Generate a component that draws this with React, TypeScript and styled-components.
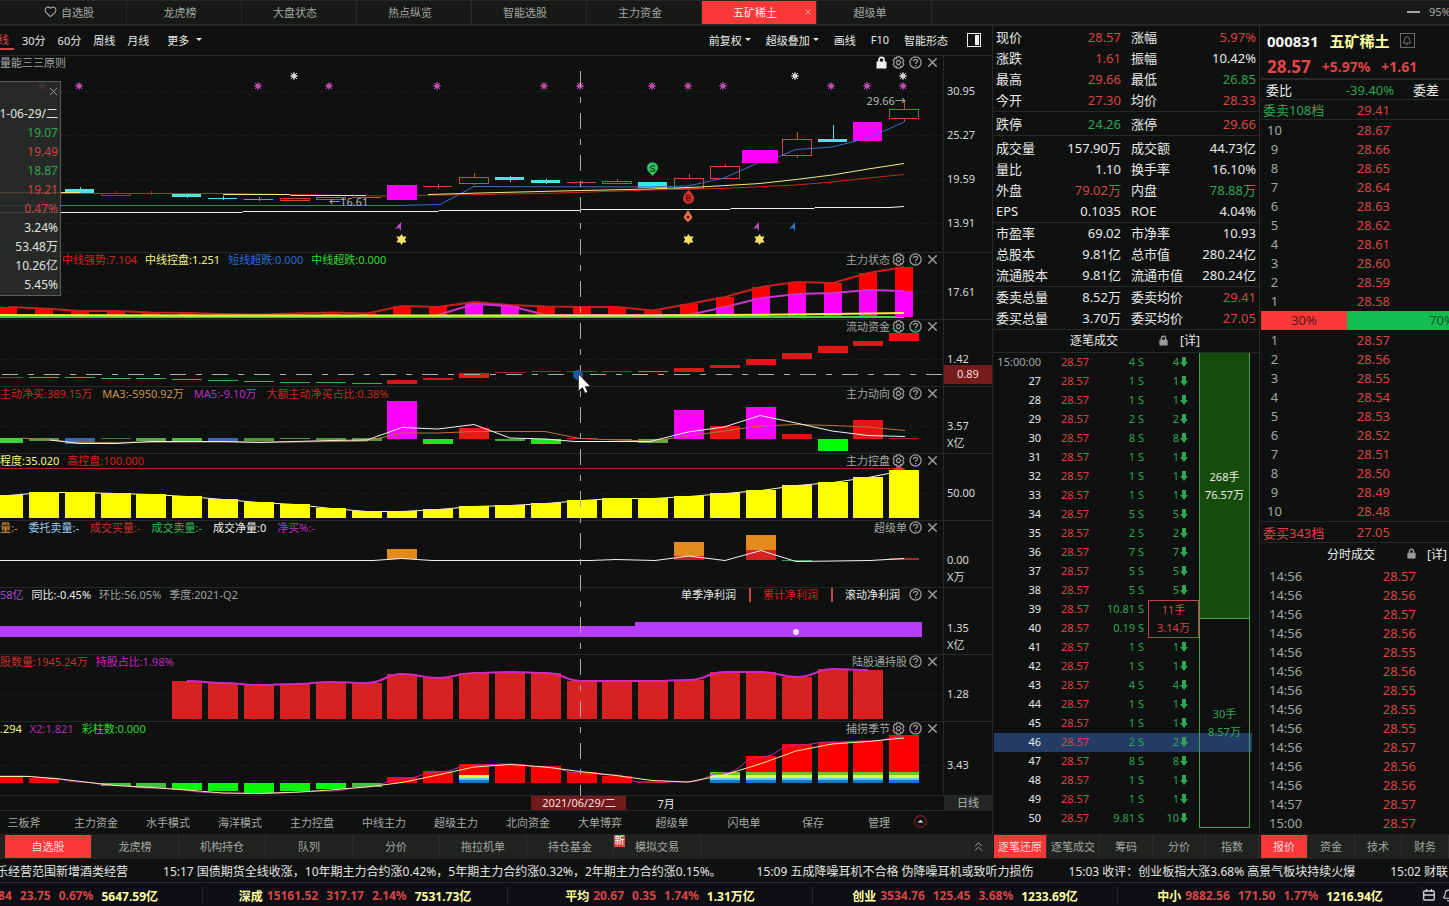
import React from "react";
import styled, { createGlobalStyle } from "styled-components";
import { Bell, ChevronsUp, Heart, X } from "lucide-react";

const C = {
  bg: "#0e110f",
  line: "#262928",
  text: "#e9e9e9",
  dim: "#a3a6a3",
  red: "#d64545",
  green: "#2fa552",
  hot: "#fb3838",
  magenta: "#ff00ff",
  yellow: "#ffffa0",
};

const Global = createGlobalStyle`
  * { box-sizing: border-box; }
  html, body { margin: 0; background: ${C.bg}; }
  body {
    color: ${C.text};
    font-family: "Noto Sans", "Noto Sans CJK SC", sans-serif;
    font-size: 11px;
    overflow-x: hidden;
  }
  button { font: inherit; color: inherit; background: none; border: 0; padding: 0; margin: 0; cursor: pointer; white-space: nowrap; }
  svg { display: block; flex: none; }
  table { border-spacing: 0; }
  td { padding: 0; }
`;

/* ---------- page frame ---------- */
const Page = styled.div`
  display: flex;
  flex-direction: column;
  overflow: hidden;
`;
const TopTabs = styled.nav`
  display: flex;
  height: 26px;
  padding-left: 12px;
  background: #171917;
  border-top: 1px solid #262826;
  border-bottom: 2px solid #252827;
`;
const TopTab = styled.button<{ $active?: boolean; $icon?: boolean }>`
  position: relative;
  display: flex;
  align-items: center;
  justify-content: center;
  gap: 4px;
  width: 115px;
  flex: none;
  padding: 0 ${(p) => (p.$icon ? 0 : 8)}px 2px 0;
  border-right: 1px solid ${C.line};
  color: ${(p) => (p.$active ? "#ffe9e9" : C.dim)};
  background: ${(p) => (p.$active ? C.hot : "transparent")};
`;
const TabClose = styled.span`
  position: absolute;
  right: 3px;
  color: #ffa0a0;
`;
const WindowTools = styled.div`
  display: flex;
  align-items: center;
  gap: 9px;
  margin-left: auto;
  width: 42px;
  flex: none;
  padding-bottom: 2px;
  color: ${C.dim};
`;
const Main = styled.main`
  display: grid;
  grid-template-columns: minmax(0, 1fr) 267px 189px;
`;
const Column = styled.section`
  display: flex;
  flex-direction: column;
  min-width: 0;
  overflow: hidden;
`;
const ChartColumn = styled(Column)`
  border-right: 1px solid ${C.line};
`;
const MiddleColumn = styled(Column)`
  padding-left: 1px;
  border-right: 1px solid #2a2d2b;
`;
const BookColumn = styled(Column)`
  padding-left: 1px;
`;

/* ---------- toolbar ---------- */
const Toolbar = styled.div`
  display: flex;
  align-items: center;
  justify-content: space-between;
  height: 30px;
  padding: 0 11px 2px 0;
  border-bottom: 1px solid ${C.line};
`;
const ToolGroup = styled.div<{ $gap: number }>`
  display: flex;
  align-items: center;
  gap: ${(p) => p.$gap}px;
`;
const ToolButton = styled.button<{ $active?: boolean }>`
  display: flex;
  align-items: center;
  gap: 3px;
  height: 20px;
  color: ${(p) => (p.$active ? C.red : C.text)};
  border-bottom: ${(p) => (p.$active ? `2px solid ${C.red}` : "0")};
`;
const ActivePeriod = styled(ToolButton)`
  width: 14px;
  margin-right: -4px;
  text-indent: -2px;
`;
const MoreButton = styled(ToolButton)`
  margin-left: 6px;
  gap: 7px;
`;
const SideToggle = styled(ToolButton)`
  margin-left: 4px;
`;

/* ---------- chart panels ---------- */
const Charts = styled.div`
  position: relative;
`;
const Panel = styled.article<{ $h: number }>`
  display: flex;
  height: ${(p) => p.$h}px;
  border-bottom: 1px solid ${C.line};
`;
const Plot = styled.div`
  position: relative;
  flex: 1;
  min-width: 0;
`;
const PlotSvg = styled.svg`
  width: 100%;
  height: 100%;
`;
const PanelHead = styled.header`
  position: absolute;
  inset: 0 0 auto 0;
  display: flex;
  align-items: center;
  justify-content: space-between;
  height: 14px;
  line-height: 14px;
  padding: 0 2px 1px 0;
  white-space: nowrap;
`;
const Legend = styled.div<{ $start?: number; $gap?: number }>`
  display: flex;
  gap: ${(p) => p.$gap ?? 8}px;
  padding-left: ${(p) => p.$start ?? 0}px;
`;
const Tinted = styled.span<{ $c: string }>`
  color: ${(p) => p.$c};
`;
const PanelTools = styled.div`
  display: flex;
  align-items: center;
  color: ${C.dim};
`;
const IconButton = styled.button`
  display: flex;
  align-items: center;
  justify-content: center;
  width: 17px;
  height: 15px;
  color: #9b9d9b;
`;
const ProfitTabs = styled.div`
  display: flex;
  align-items: center;
  margin-right: 7px;
`;
const ProfitTab = styled.button<{ $active?: boolean }>`
  color: ${(p) => (p.$active ? "#d81e1e" : C.text)};
  & + & {
    margin-left: 13px;
    padding-left: 12px;
    border-left: 2px solid #c04a4a;
  }
`;
const Axis = styled.div<{ $top: number; $step?: number }>`
  position: relative;
  width: 49px;
  flex: none;
  border-left: 1px solid ${C.line};
  padding: ${(p) => p.$top}px 0 0 3px;
  line-height: ${(p) => p.$step ?? 17}px;
  color: #d8d8d8;
`;
const AxisMarker = styled.div`
  position: absolute;
  top: 45px;
  left: 0;
  right: 0;
  height: 19px;
  line-height: 18px;
  text-align: center;
  background: #761c1c;
  color: #ffdcdc;
`;
const PriceNote = styled.span<{ $x: number; $y: number }>`
  position: absolute;
  left: ${(p) => p.$x}%;
  top: ${(p) => p.$y}px;
  line-height: 14px;
  color: #b6b6b6;
  white-space: nowrap;
`;
const Crosshair = styled.svg`
  position: absolute;
  top: 0;
  left: 0;
  width: calc(100% - 49px);
  height: 100%;
  pointer-events: none;
`;
const DayCard = styled.aside`
  position: absolute;
  left: 0;
  top: 25px;
  width: 61px;
  height: 215px;
  padding: 22px 2px 0 0;
  display: flex;
  flex-direction: column;
  align-items: flex-end;
  overflow: hidden;
  background: rgba(42, 44, 42, 0.88);
  border: 1px solid #5c5e5c;
  border-left: 0;
  font-size: 12px;
`;
const DayLine = styled.div<{ $c?: string }>`
  flex: none;
  height: 19px;
  line-height: 19px;
  white-space: nowrap;
  color: ${(p) => p.$c ?? "#e2e2e2"};
`;
const DayClose = styled.button`
  position: absolute;
  top: 3px;
  right: 0;
  color: #9a9a9a;
`;
const DateAxis = styled.div`
  display: flex;
  height: 15px;
  border-bottom: 1px solid ${C.line};
  line-height: 14px;
`;
const DateTrack = styled.div`
  display: flex;
  flex: 1;
`;
const DateTag = styled.time`
  width: 95px;
  margin-left: 56.3%;
  text-align: center;
  background: #701a1c;
  color: #ffdede;
`;
const MonthMark = styled.span`
  margin-left: 31px;
  line-height: 16px;
`;
const PeriodCell = styled.div`
  width: 48px;
  background: #242725;
  text-align: center;
  color: #b0b3b0;
`;
const IndicatorLinks = styled.nav`
  display: flex;
  align-items: center;
  height: 23px;
  margin-left: -12px;
  padding-bottom: 2px;
`;
const IndicatorButton = styled.button<{ $w: number }>`
  width: ${(p) => p.$w}px;
  flex: none;
  color: #a6a9a6;
`;

/* ---------- tab strips ---------- */
const Strip = styled.nav<{ $pad?: number }>`
  display: flex;
  height: 25px;
  margin-top: auto;
  padding: 1px 0 1px ${(p) => p.$pad ?? 0}px;
  background: #202220;
`;
const StripTab = styled.button<{ $active?: boolean; $w?: number }>`
  position: relative;
  flex: ${(p) => (p.$w ? "none" : "1 1 0")};
  width: ${(p) => (p.$w ? `${p.$w}px` : "auto")};
  padding-bottom: 2px;
  border-right: 1px solid #2c2e2c;
  color: ${(p) => (p.$active ? "#ffdada" : C.dim)};
  background: ${(p) => (p.$active ? C.hot : "transparent")};
`;
const NewBadge = styled.span`
  position: absolute;
  left: 0;
  top: 0;
  width: 11px;
  height: 12px;
  line-height: 11px;
  font-size: 10px;
  color: #fff;
  background: #e04848;
`;
const StripMore = styled.button`
  display: flex;
  align-items: center;
  margin-left: auto;
  padding-right: 6px;
  color: ${C.dim};
`;

/* ---------- quote statistics ---------- */
const StatGroup = styled.dl<{ $top: number }>`
  display: grid;
  grid-template-columns: 1fr 1fr;
  column-gap: 10px;
  margin: 0;
  padding: ${(p) => p.$top}px 3px 0 2px;
  border-bottom: 1px solid ${C.line};
  font-size: 13px;
  line-height: 21px;
`;
const Stat = styled.div`
  display: flex;
  justify-content: space-between;
  height: 21px;
  white-space: nowrap;
`;
const StatName = styled.dt``;
const StatValue = styled.dd<{ $c: string }>`
  margin: 0;
  color: ${(p) => p.$c};
`;
const ListTitle = styled.header<{ $left: number; $gap: number; $last: number }>`
  display: flex;
  align-items: center;
  height: 23px;
  padding: 0 0 2px ${(p) => p.$left}px;
  font-size: 12px;
  white-space: nowrap;
  svg { margin: 0 ${(p) => p.$last}px 0 ${(p) => p.$gap}px; }
`;
const TapeTitle = styled(ListTitle)`
  border-bottom: 1px solid ${C.line};
`;

/* ---------- tick tape ---------- */
const Tape = styled.div`
  position: relative;
  margin-bottom: 6px;
`;
const TapeTable = styled.table`
  table-layout: fixed;
  width: 258px;
  text-align: right;
`;
const TapeRow = styled.tr<{ $on?: boolean }>`
  height: 19px;
  line-height: 17px;
  vertical-align: top;
  color: ${C.green};
  background: ${(p) => (p.$on ? "#233d68" : "transparent")};
`;
const TimeCell = styled.td<{ $first?: boolean }>`
  color: ${(p) => (p.$first ? C.dim : C.text)};
`;
const PriceCell = styled.td`
  color: ${C.red};
`;
const Count = styled.div`
  display: flex;
  align-items: center;
  justify-content: flex-end;
  gap: 1px;
  padding-right: 11px;
`;
const DealCell = styled.td`
  padding-left: 4px;
`;
const Deal = styled.div`
  height: 38px;
  border: 1px solid #c04444;
  text-align: center;
  line-height: 18px;
  color: ${C.red};
`;
const Blocks = styled.div`
  position: absolute;
  top: 0;
  bottom: 0;
  left: 205px;
  width: 51px;
  display: grid;
  grid-template-rows: 14fr 11fr;
`;
const Block = styled.div<{ $filled?: boolean }>`
  display: flex;
  flex-direction: column;
  justify-content: center;
  text-align: center;
  line-height: 18px;
  border: 1px solid #3fa04f;
  border-top: 0;
  color: ${(p) => (p.$filled ? "#e6efe0" : C.green)};
  background: ${(p) => (p.$filled ? "#154c0b" : "transparent")};
`;

/* ---------- order book ---------- */
const StockHead = styled.header`
  padding: 1px 0 0 6px;
  border-bottom: 2px solid ${C.line};
  font-weight: 700;
  white-space: nowrap;
`;
const StockLine = styled.div<{ $h: number }>`
  display: flex;
  align-items: center;
  gap: 11px;
  height: ${(p) => p.$h}px;
`;
const StockText = styled.span<{ $size: number; $c: string }>`
  font-size: ${(p) => p.$size}px;
  color: ${(p) => p.$c};
`;
const AlertButton = styled.button`
  display: flex;
  align-items: center;
  justify-content: center;
  width: 15px;
  height: 15px;
  margin-left: -1px;
  border: 1px solid #686a68;
  color: #8c8e8c;
`;
const BookLine = styled.div<{ $c: string }>`
  display: flex;
  align-items: center;
  height: 20px;
  padding-left: 2px;
  border-bottom: 1px solid ${C.line};
  font-size: 13px;
  white-space: nowrap;
  color: ${(p) => p.$c};
`;
const BookName = styled.span<{ $w: number; $pad?: number }>`
  width: ${(p) => p.$w}px;
  flex: none;
  padding-left: ${(p) => p.$pad ?? 0}px;
`;
const BookValue = styled.span<{ $c: string; $w: number }>`
  width: ${(p) => p.$w}px;
  flex: none;
  color: ${(p) => p.$c};
  text-align: right;
`;
const DiffName = styled.span`
  margin-left: 19px;
`;
const BidLine = styled(BookLine)`
  height: 22px;
  border-top: 1px solid ${C.line};
`;
const BookTable = styled.table<{ $name: number; $price: number }>`
  table-layout: fixed;
  width: 100%;
  margin-top: 1px;
  font-size: 13px;
  line-height: 19px;
  tr { height: 19px; }
  td:first-child { width: ${(p) => p.$name}px; color: ${C.dim}; }
  td:nth-child(2) { width: ${(p) => p.$price}px; color: ${C.red}; text-align: right; }
`;
const LevelTable = styled(BookTable)`
  td:first-child { text-align: center; }
`;
const TradeTable = styled(BookTable)`
  td:first-child { padding-left: 8px; }
`;
const Ratio = styled.div`
  display: flex;
  height: 19px;
  line-height: 19px;
  font-size: 13px;
  color: #5c1616;
`;
const Share = styled.div<{ $c: string; $w: number }>`
  width: ${(p) => p.$w}px;
  flex: none;
  text-align: center;
  background: ${(p) => p.$c};
`;
const ShareRest = styled(Share)`
  color: #0d5527;
`;

/* ---------- bottom bars ---------- */
const News = styled.div`
  display: flex;
  align-items: center;
  gap: 35px;
  height: 24px;
  border-bottom: 1px solid ${C.line};
  font-size: 12px;
  white-space: nowrap;
  overflow: hidden;
`;
const NewsItem = styled.a`
  color: #e4e4e4;
  text-decoration: none;
  flex: none;
  &:first-child { margin-left: -4px; }
`;
const IndexBar = styled.footer`
  display: flex;
  align-items: center;
  height: 23px;
  padding-top: 2px;
  background: #0d0f14;
  font-size: 12px;
  font-weight: 700;
  white-space: nowrap;
  overflow: hidden;
`;
const IndexCell = styled.div<{ $first?: boolean }>`
  display: flex;
  flex: none;
  align-items: center;
  justify-content: ${(p) => (p.$first ? "flex-end" : "center")};
  gap: 8px;
  width: ${(p) => (p.$first ? 203 : 305)}px;
  height: 17px;
  padding-right: ${(p) => (p.$first ? 44 : 0)}px;
  border-right: 1px solid #23262c;
  color: ${C.red};
`;
const IndexName = styled.span`
  color: ${C.yellow};
  margin-right: -4px;
`;
const IndexAmount = styled.span`
  color: ${C.yellow};
`;
const FooterIcons = styled.div`
  display: flex;
  flex: none;
  gap: 7px;
  color: #d4d4d4;
`;

/* ---------- icons ---------- */
const Caret = () => (
  <svg width="6" height="3" viewBox="0 0 6 3"><path d="M0 0h6L3 3z" fill="#e9e9e9" /></svg>
);
const Gear = () => (
  <svg width="13" height="13" viewBox="0 0 14 14" fill="none" stroke="currentColor" strokeWidth="1.3">
    <path d="M5.2 1h3.6l.5 1.6 1.6-.4 1.8 3-1.1 1.8 1.1 1.8-1.8 3-1.6-.4-.5 1.6H5.2l-.5-1.6-1.6.4-1.8-3L2.4 7 1.3 5.2l1.800-3 1.600.4z" />
    <path d="M5.900 4.800h2.200L9.300 7 8.100 9.200H5.900L4.700 7z" />
  </svg>
);
const Help = () => (
  <svg width="13" height="13" viewBox="0 0 14 14" fill="none" stroke="currentColor" strokeWidth="1.4">
    <circle cx="7" cy="7" r="6" />
    <path d="M4.900 5.600c0-2.700 4.300-2.700 4.300-.2 0 1.600-2.100 1.500-2.100 3.100M7.100 9.700v1.300" />
  </svg>
);
const Lock = ({ color, size = 11 }: { color: string; size?: number }) => (
  <svg width={size} height={size + 2} viewBox="0 0 11 13">
    <path d="M3 6V3.800a2.500 2.500 0 0 1 5 0V6" fill="none" stroke={color} strokeWidth="1.700" />
    <rect x="0.500" y="5.500" width="10" height="7" rx="0.500" fill={color} />
  </svg>
);
const DownArrow = () => (
  <svg width="8" height="10" viewBox="0 0 8 10"><path d="M2 0h4v5h2L4 10 0 5h2z" fill="#2fa552" /></svg>
);
const SidePanelIcon = () => (
  <svg width="14" height="14" viewBox="0 0 14 14">
    <rect x="0.500" y="0.500" width="13" height="13" fill="none" stroke="#ededed" />
    <rect x="8" y="2" width="4" height="10" fill="#ededed" />
  </svg>
);
const CalendarIcon = () => (
  <svg width="12" height="12" viewBox="0 0 12 12" fill="none" stroke="currentColor" strokeWidth="1.300">
    <rect x="0.700" y="2" width="10.600" height="9" rx="1" />
    <path d="M0.700 6h10.600M3.500 0v3M8.500 0v3" />
  </svg>
);
const CircleUp = () => (
  <svg width="13" height="13" viewBox="0 0 13 13">
    <circle cx="6.500" cy="6.500" r="5.800" fill="none" stroke="#8c2020" strokeWidth="1.200" />
    <path d="M3.500 7.500 6.500 5l3 2.500z" fill="#f0f0f0" />
  </svg>
);

/* ---------- chart geometry ---------- */
const left = (i: number) => Math.round(-7 + 35.85 * i);
const mid = (i: number) => left(i) + 15;
const W = 943;

type Pt = [number, number];
const path = (pts: Pt[], dy: number) => pts.map(([x, y]) => `${x},${y - dy}`).join(" ");
const smooth = (pts: Pt[], dy: number) => {
  let d = `M${pts[0][0]} ${pts[0][1] - dy}`;
  for (let i = 1; i < pts.length; i++) {
    const [x0, y0] = pts[i - 1];
    const [x1, y1] = pts[i];
    const m = (x0 + x1) / 2;
    d += ` C${m} ${y0 - dy} ${m} ${y1 - dy} ${x1} ${y1 - dy}`;
  }
  return d;
};
const Line = ({ pts, dy, c, w = 1 }: { pts: Pt[]; dy: number; c: string; w?: number }) => (
  <polyline points={path(pts, dy)} fill="none" stroke={c} strokeWidth={w} />
);
const Box = ({ i, a, b, dy, c, w = 30 }: { i: number; a: number; b: number; dy: number; c: string; w?: number }) => (
  <rect x={mid(i) - w / 2} y={a - dy} width={w} height={b - a} fill={c} />
);
const Grid = ({ ys }: { ys: number[] }) => (
  <g stroke="#1a1d1b" strokeDasharray="3 2">
    {ys.map((y) => <line key={y} x1="0" x2={W} y1={y + 0.5} y2={y + 0.5} />)}
  </g>
);

const Burst = ({ x, y, c }: { x: number; y: number; c: string }) => (
  <g transform={`translate(${x} ${y - 56})`}>
    <path d="M-4 0H4M0-4V4M-3-3 3 3M3-3-3 3" stroke={c} strokeWidth="1" />
    <circle r="2.500" fill={c} />
  </g>
);
const Flag = ({ x, c }: { x: number; c: string }) => (
  <path d={`M${x - 4} 173 ${x + 2} 166V175L${x} 172z`} fill={c} />
);
const Hex = ({ x }: { x: number }) => (
  <path transform={`translate(${x} 183.500)`} d="M0-5.500 1.600-3H5L3.400 0 5 3H1.600L0 5.500-1.600 3H-5L-3.400 0-5-3h3.400z" fill="#f7e06a" />
);

type Candle = { i: number; a: number; b: number; hi?: number; lo?: number; k: "hollow" | "fill"; c: string };
const RED = "#d34640";
const CYAN = "#4fe3e6";
const candles: Candle[] = [
  { i: 2, a: 189, b: 193, hi: 187, k: "fill", c: CYAN },
  { i: 3, a: 193, b: 195, hi: 191, k: "hollow", c: "#a83028" },
  { i: 4, a: 193, b: 194, hi: 191, lo: 195, k: "fill", c: "#a83028" },
  { i: 5, a: 194, b: 197, lo: 198, k: "fill", c: CYAN },
  { i: 6, a: 198, b: 199, hi: 196, lo: 200, k: "fill", c: CYAN },
  { i: 7, a: 199, b: 200, hi: 197, lo: 201, k: "fill", c: "#35d535" },
  { i: 8, a: 198, b: 200, k: "hollow", c: RED },
  { i: 9, a: 197, b: 199, k: "hollow", c: RED },
  { i: 10, a: 197, b: 198, k: "fill", c: RED },
  { i: 12, a: 186, b: 187, hi: 184, lo: 189, k: "fill", c: RED },
  { i: 13, a: 177, b: 183, hi: 173, lo: 185, k: "hollow", c: RED },
  { i: 14, a: 177, b: 180, hi: 176, lo: 182, k: "fill", c: CYAN },
  { i: 15, a: 180, b: 183, hi: 179, lo: 184, k: "fill", c: CYAN },
  { i: 16, a: 182, b: 183, hi: 181, lo: 184, k: "fill", c: RED },
  { i: 17, a: 181, b: 183, hi: 179, lo: 184, k: "hollow", c: RED },
  { i: 18, a: 182, b: 188, k: "fill", c: "#2beaf0" },
  { i: 19, a: 178, b: 188, hi: 174, lo: 189, k: "hollow", c: RED },
  { i: 20, a: 166, b: 178, hi: 164, k: "hollow", c: RED },
  { i: 22, a: 139, b: 155, hi: 132, lo: 158, k: "hollow", c: RED },
  { i: 23, a: 139, b: 142, hi: 125, k: "fill", c: CYAN },
  { i: 24, a: 122, b: 141, k: "fill", c: C.magenta },
  { i: 25, a: 109, b: 118, hi: 101, lo: 122, k: "hollow", c: RED },
];

const PriceChart = () => {
  const o = 56;
  return (
    <PlotSvg viewBox={`0 0 ${W} 196`} preserveAspectRatio="none">
      <Grid ys={[35, 79, 123, 167]} />
      {candles.map((k) => (
        <g key={k.i}>
          {k.hi && <line x1={mid(k.i) + 0.5} x2={mid(k.i) + 0.5} y1={k.hi - o} y2={k.a - o} stroke={k.c} />}
          {k.lo && <line x1={mid(k.i) + 0.5} x2={mid(k.i) + 0.5} y1={k.b - o} y2={k.lo - o} stroke={k.c} />}
          {k.k === "fill"
            ? <rect x={left(k.i)} y={k.a - o} width="29" height={k.b - k.a} fill={k.c} />
            : <rect x={left(k.i) + 0.5} y={k.a - o + 0.5} width="29" height={k.b - k.a} fill="none" stroke={k.c} />}
        </g>
      ))}
      <Line dy={o} c="#3a6fc4" pts={[[0, 205.5], [397, 205.5], [440, 204.5], [474, 186.5], [650, 187], [688, 186], [724, 178], [760, 162], [778, 157], [796, 149.5], [832, 147], [868, 138], [884, 131], [904, 122]]} />
      <Line dy={o} c="#f2f2f2" pts={[[0, 212.5], [242, 212.5], [243, 211.5], [438, 211.5], [439, 210.5], [580, 210.5], [581, 209.5], [730, 209.5], [731, 208.5], [814, 208.5], [815, 207.5], [890, 207.5], [904, 206.5]]} />
      <Line dy={o} c="#c8281c" pts={[[0, 193.5], [223, 193.5], [380, 196], [480, 194.5], [560, 193], [650, 190], [720, 188.5], [796, 185], [832, 182], [868, 178], [904, 174.5]]} />
      <Line dy={o} c="#f5e87c" pts={[[0, 192.5], [80, 192.5]]} />
      <Line dy={o} c="#f5e87c" pts={[[223, 194.5], [290, 194.5], [291, 195.5], [366, 195.5]]} />
      <Line dy={o} c="#f5e87c" pts={[[428, 194.5], [480, 193], [560, 191], [650, 189], [700, 187], [760, 183.5], [796, 179.5], [832, 175], [868, 169], [904, 163.5]]} />
      <Box i={11} a={185} b={200} dy={o} c={C.magenta} />
      <rect x="742" y={150 - o} width="36" height="13" fill={C.magenta} />
      {[42, 79, 258, 329, 437, 544, 580, 652, 688, 723, 831, 867, 903].map((x) => <Burst key={x} x={x} y={86} c="#c04aa8" />)}
      {[294, 795, 903].map((x) => <Burst key={x} x={x} y={76} c="#d4d4d4" />)}
      <path d="M652.500 120l-4-4.500a5.500 5.500 0 1 1 8 0z" fill="#2fc462" />
      <path d="M654.800 110.500c-1-1.300-4.300-1-4.300.700 0 2 4.300.900 4.300 2.800 0 1.700-3.500 1.800-4.500.300" fill="none" stroke="#084a20" strokeWidth="1.200" />
      <path d="M688.500 133.500l4 5a5.500 5.500 0 1 1-8 0z" fill="#d8322c" />
      <path d="M686.700 139v6h2.400a1.500 1.500 0 0 0 0-3.100h-2.400 2a1.400 1.400 0 0 0 0-2.900z" fill="none" stroke="#4c0a08" />
      <path d="M688 154l4.500 7-2 3-2.500 2-2.500-2-2-3z" fill="#e8734a" />
      <circle cx="688" cy="161" r="1.500" fill="#4a140a" />
      <Flag x={399} c="#c04ac0" />
      <Flag x={757} c="#c04ac0" />
      <Flag x={793} c="#2f78c8" />
      <Hex x={401.5} />
      <Hex x={688.5} />
      <Hex x={759.5} />
    </PlotSvg>
  );
};

const stateTops = [307, 308.5, 311, 311, 312.5, 313, 314, 314.5, 313.5, 312.5, 313.5, 306, 307, 302, 305, 306.5, 307, 307, 310.5, 304, 297, 287, 282, 283, 273, 267];
const stateMagenta: Record<number, number> = { 13: 303, 14: 306, 20: 307, 21: 298, 22: 294, 23: 293, 24: 290, 25: 291 };
const StateChart = () => (
  <PlotSvg viewBox={`0 0 ${W} 66`} preserveAspectRatio="none">
    <Grid ys={[39]} />
    {stateTops.map((y, i) => <Box key={i} i={i} a={y} b={316} dy={253} c="#ff0000" w={18} />)}
    {Object.entries(stateMagenta).map(([i, y]) => <Box key={i} i={+i} a={y} b={316} dy={253} c={C.magenta} w={18} />)}
    <Line dy={253} c="#c81e1e" w={2} pts={stateTops.map((y, i) => [mid(i), y] as Pt)} />
    <Line dy={253} c="#d030d0" w={2} pts={[[mid(12), 315], [mid(13), 304], [mid(14), 306], [mid(15), 315], [mid(19), 315], [mid(20), 307], [mid(21), 298], [mid(22), 294], [mid(23), 293], [mid(24), 290], [mid(25), 291]]} />
    <Line dy={253} c="#46cf46" w={2} pts={[[0, 317], [904, 317]]} />
    <Line dy={253} c="#f5f03a" w={2} pts={[[0, 315], [200, 315.5], [640, 315.5], [724, 315], [832, 314], [904, 313]]} />
    <rect x="895" y="62" width="18" height="2" fill={C.magenta} />
  </PlotSvg>
);

const flow: [number, number, string][] = [
  [377, 378, "#b02424"], [377, 378, "#3fae46"], [377, 378, "#3fae46"], [378, 379, "#3fae46"], [378, 379, "#3fae46"], [379, 380, "#3fae46"],
  [380, 381, "#3fae46"], [381, 382, "#3fae46"], [382, 383, "#3fae46"], [382, 383, "#3fae46"], [383, 384, "#3fae46"], [380, 384, "#c81e1e"],
  [378, 380, "#c81e1e"], [373, 378, "#f01818"], [372, 373, "#b02020"], [371, 372, "#b02020"], [371, 372, "#b02020"], [371, 372, "#b02020"],
  [371, 372, "#3fb446"], [368, 372, "#dc1818"], [365, 368, "#dc1818"], [359, 365, "#dc1818"], [353, 359, "#dc1818"], [346, 353, "#e61414"],
  [341, 346, "#dc1818"], [333, 341, "#e61414"],
];
const FlowChart = () => (
  <PlotSvg viewBox={`0 0 ${W} 66`} preserveAspectRatio="none">
    <Grid ys={[39]} />
    {flow.map(([a, b, c], i) => <Box key={i} i={i} a={a} b={b} dy={320} c={c} />)}
  </PlotSvg>
);

const moves: [number, number, string][] = [
  [438, 443, "#3fd53a"], [438, 441, "#55983e"], [438, 444, "#3b68a8"], [438, 439, "#3f7a34"], [438, 441, "#58a846"], [438, 441, "#4cc03c"],
  [438, 442, "#3b68b8"], [438, 441, "#4c9c3c"], [438, 439, "#4c9c3c"], [438, 440, "#4c9c3c"], [438, 441, "#55983e"], [401, 439, C.magenta],
  [439, 444, "#22e622"], [428, 439, "#f01818"], [439, 441, "#3fae38"], [439, 444, "#1fe61f"], [438, 439, "#c03018"], [439, 440, "#58903c"],
  [439, 443, "#63a840"], [410, 439, C.magenta], [426, 439, "#f01414"], [407, 439, C.magenta], [434, 439, "#dc1414"], [439, 451, "#00ff00"],
  [420, 439, "#e61414"], [438, 439, "#a82020"],
];
const MoveChart = () => (
  <PlotSvg viewBox={`0 0 ${W} 66`} preserveAspectRatio="none">
    <Grid ys={[39]} />
    {moves.map(([a, b, c], i) => <Box key={i} i={i} a={a} b={b} dy={387} c={c} />)}
    <Line dy={387} c="#b4743c" pts={[[22, 438], [mid(2), 442.5], [mid(5), 442], [mid(8), 442], [mid(10), 441], [402, 433], [438, 433], [474, 431.5], [545, 431.5], [580, 438.5], [616, 440], [652, 441], [688, 436], [724, 431], [760, 426], [796, 424.5], [832, 425.5], [868, 427], [905, 430.5]]} />
    <Line dy={387} c="#f2f2f2" pts={[[50, 440], [mid(2), 443.5], [mid(3), 443.5], [mid(4), 441.5], [mid(6), 441.5], [mid(7), 442.5], [mid(9), 440.5], [367, 440], [402, 427.5], [438, 429], [474, 424.5], [510, 438], [545, 439], [575, 441.5], [650, 441.5], [688, 432], [724, 427], [760, 415.5], [796, 423], [832, 431], [868, 435.5], [905, 436.5]]} />
  </PlotSvg>
);

const control = [495, 492, 492, 493, 494, 496, 499, 502, 504, 508, 511, 511, 509, 506, 505, 503, 500, 498, 498, 496, 493, 490, 485, 482, 477, 470];
const ControlChart = () => (
  <PlotSvg viewBox={`0 0 ${W} 66`} preserveAspectRatio="none">
    <Grid ys={[39]} />
    <Line dy={454} c="#c01c1c" pts={[[0, 468.5], [905, 468.5]]} />
    <Line dy={454} c="#fdfdd0" pts={control.map((y, i) => [mid(i), y + 0.5] as Pt)} />
    {control.map((y, i) => <Box key={i} i={i} a={y} b={518} dy={454} c="#ffff00" />)}
    <path d="M893 16l6-5 6 5z" fill="#e03030" />
  </PlotSvg>
);

const SuperChart = () => (
  <PlotSvg viewBox={`0 0 ${W} 66`} preserveAspectRatio="none">
    <Box i={11} a={549} b={559} dy={521} c="#e28a1c" />
    <Box i={19} a={542} b={556} dy={521} c="#e28a1c" />
    <Box i={19} a={556} b={560} dy={521} c="#c02626" />
    <Box i={21} a={535} b={550} dy={521} c="#e28a1c" />
    <Box i={21} a={550} b={560} dy={521} c="#d42222" />
    <Box i={22} a={560} b={561} dy={521} c="#2f9c4c" />
    <Box i={25} a={558} b={560} dy={521} c="#a82c2c" />
    <Line dy={521} c="#f2f2f2" pts={[[0, 560.5], [373, 560.5], [402, 558.5], [432, 560.5], [590, 560.5], [616, 559.5], [655, 560.5], [689, 556], [725, 560.5], [761, 550.5], [796, 561.5], [870, 560.5], [904, 558.5]]} />
  </PlotSvg>
);

const ProfitChart = () => (
  <PlotSvg viewBox={`0 0 ${W} 66`} preserveAspectRatio="none">
    <path d="M0 38H635V34H922V49H0z" fill="#b83cfb" />
    <circle cx="796" cy="44" r="3" fill="#fbeaff" />
  </PlotSvg>
);

const holdings = [681, 683, 685, 684, 682, 683, 674, 678, 673, 672, 673, 681, 681, 681, 680, 672, 672, 677, 669, 670];
const HoldingChart = () => (
  <PlotSvg viewBox={`0 0 ${W} 66`} preserveAspectRatio="none">
    <Grid ys={[39]} />
    {holdings.map((y, k) => <Box key={k} i={k + 5} a={y} b={719} dy={655} c="#d82222" />)}
    <path d={smooth(holdings.map((y, k) => [mid(k + 5), y] as Pt), 655)} fill="none" stroke="#d028c0" strokeWidth="2" />
  </PlotSvg>
);

const season: Record<number, number> = { 0: 777, 1: 778, 3: 786, 4: 788, 5: 790, 6: 791, 7: 793, 8: 791, 9: 789, 10: 787, 11: 777, 12: 771, 13: 764, 14: 764, 15: 766, 16: 772, 17: 776, 18: 782, 20: 772, 21: 756, 22: 744, 23: 742, 24: 741, 25: 735 };
const SeasonChart = () => (
  <PlotSvg viewBox={`0 0 ${W} 73`} preserveAspectRatio="none">
    <Grid ys={[43]} />
    {Object.entries(season).map(([i, y]) =>
      y > 783
        ? <Box key={i} i={+i} a={783} b={y} dy={722} c={y > 788 ? "#08f808" : "#3fc43f"} />
        : <Box key={i} i={+i} a={y} b={783} dy={722} c="#ff0000" />)}
    {[13, 20, 21, 22, 23, 24, 25].map((i) => (
      <g key={i}>
        {i > 13 && <Box i={i} a={772} b={775} dy={722} c="#6cc81e" />}
        <Box i={i} a={775} b={778} dy={722} c="#e0ff3c" />
        <Box i={i} a={778} b={780} dy={722} c="#50d8d8" />
        <Box i={i} a={780} b={783} dy={722} c="#1a78c4" />
      </g>
    ))}
    <path d={smooth([[0, 776], [20, 776], [50, 778], [79, 782], [115, 785.5], [151, 788], [223, 793], [259, 793.5], [330, 791], [366, 787], [402, 779], [438, 772], [474, 765], [510, 764], [545, 767], [580, 773], [616, 775], [640, 782], [688, 782], [724, 773], [760, 757], [796, 745], [832, 742], [868, 741], [904, 737]], 722)} fill="none" stroke="#c028b0" />
    <Line dy={722} c="#f7eda0" pts={[[0, 776.5], [30, 776.5], [60, 779], [115, 785.5], [151, 787.5], [187, 790], [223, 793], [259, 793.5], [300, 792], [330, 790], [366, 787], [402, 782.5], [438, 775], [474, 767], [510, 764.5], [545, 767], [580, 771.5], [616, 775.5], [652, 780.5], [688, 782], [724, 775], [760, 764], [796, 751], [832, 744], [868, 741.5], [904, 738]]} />
  </PlotSvg>
);

/* ---------- panels ---------- */
type LegendItem = [string, string];
type PanelDef = {
  title: string;
  h: number;
  gear?: boolean;
  legend: LegendItem[];
  start?: number;
  gap?: number;
  axis: string[];
  axisTop: number;
  chart: React.ReactNode;
  marker?: string;
};
const panels: PanelDef[] = [
  { title: "主力状态", h: 67, gear: true, start: 62, legend: [["中线强势:7.104", "#d8201c"], ["中线控盘:1.251", "#f5f58c"], ["短线超跌:0.000", "#2f6ad0"], ["中线超跌:0.000", "#2ed82e"]], axis: ["17.61"], axisTop: 30, chart: <StateChart /> },
  { title: "流动资金", h: 67, gear: true, legend: [], axis: ["1.42"], axisTop: 30, chart: <FlowChart />, marker: "0.89" },
  { title: "主力动向", h: 67, gear: true, gap: 10, legend: [["主动净买:389.15万", "#c82822"], ["MA3:-5950.92万", "#cc9450"], ["MA5:-9.10万", "#c428c4"], ["大额主动净买占比:0.38%", "#c82822"]], axis: ["3.57", "X亿"], axisTop: 30, chart: <MoveChart /> },
  { title: "主力控盘", h: 67, gear: true, legend: [["程度:35.020", "#f5f58c"], ["高控盘:100.000", "#d8201c"]], axis: ["50.00"], axisTop: 30, chart: <ControlChart /> },
  { title: "超级单", h: 67, gap: 11, legend: [["量:-", "#d89448"], ["委托卖量:-", "#9cc8f0"], ["成交买量:-", "#c8302c"], ["成交卖量:-", "#35b85a"], ["成交净量:0", "#f0f0f0"], ["净买%:-", "#c428c4"]], axis: ["0.00", "X万"], axisTop: 30, chart: <SuperChart /> },
  { title: "", h: 67, legend: [["58亿", "#a848d8"], ["同比:-0.45%", "#ededed"], ["环比:56.05%", "#a0a0a0"], ["季度:2021-Q2", "#a0a0a0"]], axis: ["1.35", "X亿"], axisTop: 31, chart: <ProfitChart /> },
  { title: "陆股通持股", h: 67, legend: [["股数量:1945.24万", "#c8302c"], ["持股占比:1.98%", "#c428c4"]], axis: ["1.28"], axisTop: 30, chart: <HoldingChart /> },
  { title: "捕捞季节", h: 74, gear: true, legend: [[".294", "#f5f58c"], ["X2:1.821", "#b428b4"], ["彩柱数:0.000", "#2ed82e"]], axis: ["3.43"], axisTop: 34, chart: <SeasonChart /> },
];

const Tools = ({ gear }: { gear?: boolean }) => (
  <>
    {gear && <IconButton aria-label="设置"><Gear /></IconButton>}
    <IconButton aria-label="帮助"><Help /></IconButton>
    <IconButton aria-label="关闭"><X size={15} strokeWidth={2.4} /></IconButton>
  </>
);

const dayLines: [string, string?][] = [
  ["1-06-29/二"], ["19.07", C.green], ["19.49", "#c84444"], ["18.87", C.green], ["19.21", "#c84444"], ["0.47%", "#c84444"],
  ["3.24%"], ["53.48万"], ["10.26亿"], ["5.45%"],
];

const w = C.text, r = C.red, g = C.green;
const stats: { top: number; items: [string, string, string][] }[] = [
  { top: 1, items: [["现价", "28.57", r], ["涨幅", "5.97%", r], ["涨跌", "1.61", r], ["振幅", "10.42%", w], ["最高", "29.66", r], ["最低", "26.85", g], ["今开", "27.30", r], ["均价", "28.33", r]] },
  { top: 2, items: [["跌停", "24.26", g], ["涨停", "29.66", r]] },
  { top: 2, items: [["成交量", "157.90万", w], ["成交额", "44.73亿", w], ["量比", "1.10", w], ["换手率", "16.10%", w], ["外盘", "79.02万", r], ["内盘", "78.88万", g], ["EPS", "0.1035", w], ["ROE", "4.04%", w]] },
  { top: 0, items: [["市盈率", "69.02", w], ["市净率", "10.93", w], ["总股本", "9.81亿", w], ["总市值", "280.24亿", w], ["流通股本", "9.81亿", w], ["流通市值", "280.24亿", w]] },
  { top: 0, items: [["委卖总量", "8.52万", w], ["委卖均价", "29.41", r], ["委买总量", "3.70万", w], ["委买均价", "27.05", r]] },
];

const tape: [string, string, string][] = [
  ["15:00:00", "4", "4"], ["27", "1", "1"], ["28", "1", "1"], ["29", "2", "2"], ["30", "8", "8"], ["31", "1", "1"], ["32", "1", "1"],
  ["33", "1", "1"], ["34", "5", "5"], ["35", "2", "2"], ["36", "7", "7"], ["37", "5", "5"], ["38", "5", "5"], ["39", "10.81", "deal"],
  ["40", "0.19", ""], ["41", "1", "1"], ["42", "1", "1"], ["43", "4", "4"], ["44", "1", "1"], ["45", "1", "1"], ["46", "2", "2"],
  ["47", "8", "8"], ["48", "1", "1"], ["49", "1", "1"], ["50", "9.81", "10"],
];

const asks = [67, 66, 65, 64, 63, 62, 61, 60, 59, 58];
const bids = [57, 56, 55, 54, 53, 52, 51, 50, 49, 48];
const trades: [string, string][] = [
  ["14:56", "28.57"], ["14:56", "28.56"], ["14:56", "28.57"], ["14:56", "28.56"], ["14:56", "28.55"], ["14:56", "28.56"], ["14:56", "28.55"],
  ["14:56", "28.55"], ["14:56", "28.55"], ["14:56", "28.57"], ["14:56", "28.56"], ["14:56", "28.56"], ["14:57", "28.57"], ["15:00", "28.57"],
];

const indices: string[][] = [
  ["深成", "15161.52", "317.17", "2.14%", "7531.73亿"],
  ["平均", "20.67", "0.35", "1.74%", "1.31万亿"],
  ["创业", "3534.76", "125.45", "3.68%", "1233.69亿"],
  ["中小", "9882.56", "171.50", "1.77%", "1216.94亿"],
];

export default function App() {
  return (
    <Page>
      <Global />
      <TopTabs>
        <TopTab $icon><Heart size={13} /><span>自选股</span></TopTab>
        {["龙虎榜", "大盘状态", "热点纵览", "智能选股", "主力资金"].map((t) => <TopTab key={t}>{t}</TopTab>)}
        <TopTab $active>五矿稀土<TabClose><X size={10} /></TabClose></TopTab>
        <TopTab>超级单</TopTab>
        <WindowTools>
          <svg width="13" height="2" viewBox="0 0 13 2"><path d="M0 1h13" stroke="#a3a6a3" strokeWidth="2" /></svg>
          <span>95%</span>
        </WindowTools>
      </TopTabs>

      <Main>
        <ChartColumn>
          <Toolbar>
            <ToolGroup $gap={12}>
              <ActivePeriod $active>线</ActivePeriod>
              {["30分", "60分", "周线", "月线"].map((t) => <ToolButton key={t}>{t}</ToolButton>)}
              <MoreButton>更多<Caret /></MoreButton>
            </ToolGroup>
            <ToolGroup $gap={15}>
              <ToolButton>前复权<Caret /></ToolButton>
              <ToolButton>超级叠加<Caret /></ToolButton>
              <ToolButton>画线</ToolButton>
              <ToolButton>F10</ToolButton>
              <ToolButton>智能形态</ToolButton>
              <SideToggle aria-label="侧栏"><SidePanelIcon /></SideToggle>
            </ToolGroup>
          </Toolbar>

          <Charts>
            <Panel $h={197}>
              <Plot>
                <PriceChart />
                <PriceNote $x={34.9} $y={139}>←16.61</PriceNote>
                <PriceNote $x={91.9} $y={38}>29.66→</PriceNote>
                <PanelHead>
                  <Legend><Tinted $c={C.dim}>量能三三原则</Tinted></Legend>
                  <PanelTools>
                    <IconButton aria-label="锁定"><Lock color="#f0f0f0" /></IconButton>
                    <Tools gear />
                  </PanelTools>
                </PanelHead>
              </Plot>
              <Axis $top={13} $step={44}>
                {["30.95", "25.27", "19.59", "13.91"].map((t) => <div key={t}>{t}</div>)}
              </Axis>
            </Panel>
            {panels.map((p, k) => (
              <Panel key={k} $h={p.h}>
                <Plot>
                  {p.chart}
                  <PanelHead>
                    <Legend $start={p.start} $gap={p.gap}>
                      {p.legend.map(([t, c]) => <Tinted key={t} $c={c}>{t}</Tinted>)}
                    </Legend>
                    <PanelTools>
                      {p.title ? <span>{p.title}</span> : (
                        <ProfitTabs>
                          <ProfitTab>单季净利润</ProfitTab>
                          <ProfitTab $active>累计净利润</ProfitTab>
                          <ProfitTab>滚动净利润</ProfitTab>
                        </ProfitTabs>
                      )}
                      <Tools gear={p.gear} />
                    </PanelTools>
                  </PanelHead>
                </Plot>
                <Axis $top={p.axisTop}>
                  {p.axis.map((t) => <div key={t}>{t}</div>)}
                  {p.marker && <AxisMarker>{p.marker}</AxisMarker>}
                </Axis>
              </Panel>
            ))}
            <Crosshair viewBox="0 0 943 740" preserveAspectRatio="none">
              <g stroke="#a9acab" strokeDasharray="16 10 6 10">
                <line x1="580.5" x2="580.5" y1="15" y2="740" />
                <line x1="2" x2="943" y1="318.5" y2="318.5" />
              </g>
              <circle cx="578" cy="319" r="5" fill="#1d58a8" />
              <path d="M578.500 318v17l4-3.600 2.600 5.800 2.600-1.200-2.500-5.600h5.300z" fill="#fff" stroke="#111" strokeWidth="0.600" />
            </Crosshair>
            <DayCard>
              <DayClose aria-label="关闭"><X size={13} strokeWidth={1.8} /></DayClose>
              {dayLines.map(([t, c]) => <DayLine key={t} $c={c}>{t}</DayLine>)}
            </DayCard>
          </Charts>

          <DateAxis>
            <DateTrack>
              <DateTag>2021/06/29/二</DateTag>
              <MonthMark>7月</MonthMark>
            </DateTrack>
            <PeriodCell>日线</PeriodCell>
          </DateAxis>

          <IndicatorLinks>
            {["三板斧", "主力资金", "水手模式", "海洋模式", "主力控盘", "中线主力", "超级主力", "北向资金", "大单博弈", "超级单", "闪电单"].map((t) => (
              <IndicatorButton key={t} $w={72}>{t}</IndicatorButton>
            ))}
            <IndicatorButton $w={66}>保存</IndicatorButton>
            <IndicatorButton $w={66}>管理</IndicatorButton>
            <IconButton aria-label="展开"><CircleUp /></IconButton>
          </IndicatorLinks>

          <Strip $pad={5}>
            <StripTab $active $w={87}>自选股</StripTab>
            {["龙虎榜", "机构持仓", "队列", "分价", "拖拉机单", "持仓基金"].map((t) => <StripTab key={t} $w={87}>{t}</StripTab>)}
            <StripTab $w={87}><NewBadge>新</NewBadge>模拟交易</StripTab>
            <StripMore aria-label="更多"><ChevronsUp size={15} strokeWidth={1.5} /></StripMore>
          </Strip>
        </ChartColumn>

        <MiddleColumn>
          {stats.map((s, k) => (
            <StatGroup key={k} $top={s.top}>
              {s.items.map(([n, v, c]) => (
                <Stat key={n}><StatName>{n}</StatName><StatValue $c={c}>{v}</StatValue></Stat>
              ))}
            </StatGroup>
          ))}
          <TapeTitle $left={76} $gap={41} $last={12}>
            <span>逐笔成交</span><Lock color="#9c9c9c" size={9} /><span>[详]</span>
          </TapeTitle>
          <Tape>
            <TapeTable>
              <colgroup>
                <col style={{ width: 47 }} /><col style={{ width: 48 }} /><col style={{ width: 55 }} /><col style={{ width: 55 }} /><col />
              </colgroup>
              <tbody>
                {tape.map(([t, v, n], i) => (
                  <TapeRow key={t} $on={t === "46"}>
                    <TimeCell $first={i === 0}>{t}</TimeCell>
                    <PriceCell>28.57</PriceCell>
                    <td>{v} S</td>
                    {n === "deal" && <DealCell rowSpan={2}><Deal>11手<br />3.14万</Deal></DealCell>}
                    {n !== "deal" && n !== "" && <td><Count>{n}<DownArrow /></Count></td>}
                    <td />
                  </TapeRow>
                ))}
              </tbody>
            </TapeTable>
            <Blocks>
              <Block $filled><span>268手</span><span>76.57万</span></Block>
              <Block><span>30手</span><span>8.57万</span></Block>
            </Blocks>
          </Tape>
          <Strip>
            {["逐笔还原", "逐笔成交", "筹码", "分价", "指数"].map((t, i) => <StripTab key={t} $active={i === 0}>{t}</StripTab>)}
          </Strip>
        </MiddleColumn>

        <BookColumn>
          <StockHead>
            <StockLine $h={27}>
              <StockText $size={15} $c="#f5f5f5">000831</StockText>
              <StockText $size={15} $c={C.yellow}>五矿稀土</StockText>
              <AlertButton aria-label="预警"><Bell size={10} /></AlertButton>
            </StockLine>
            <StockLine $h={24}>
              <StockText $size={17} $c="#e84444">28.57</StockText>
              <StockText $size={14} $c="#e04444">+5.97%</StockText>
              <StockText $size={14} $c="#e04444">+1.61</StockText>
            </StockLine>
          </StockHead>
          <BookLine $c={C.text}>
            <BookName $w={66} $pad={3}>委比</BookName>
            <BookValue $w={65} $c={C.green}>-39.40%</BookValue>
            <DiffName>委差</DiffName>
          </BookLine>
          <BookLine $c={C.green}>
            <BookName $w={66}>委卖108档</BookName>
            <BookValue $w={61} $c={C.red}>29.41</BookValue>
          </BookLine>
          <LevelTable $name={27} $price={102}>
            <tbody>
              {asks.map((p, i) => <tr key={p}><td>{10 - i}</td><td>28.{p}</td><td /></tr>)}
            </tbody>
          </LevelTable>
          <Ratio>
            <Share $c={C.hot} $w={86}>30%</Share>
            <ShareRest $c="#12be50" $w={190}>70%</ShareRest>
          </Ratio>
          <LevelTable $name={27} $price={102}>
            <tbody>
              {bids.map((p, i) => <tr key={p}><td>{i + 1}</td><td>28.{p}</td><td /></tr>)}
            </tbody>
          </LevelTable>
          <BidLine $c={C.red}>
            <BookName $w={66}>委买343档</BookName>
            <BookValue $w={61} $c={C.red}>27.05</BookValue>
          </BidLine>
          <ListTitle $left={66} $gap={32} $last={11}>
            <span>分时成交</span><Lock color="#9c9c9c" size={9} /><span>[详]</span>
          </ListTitle>
          <TradeTable $name={69} $price={86}>
            <tbody>
              {trades.map(([t, p], i) => <tr key={i}><td>{t}</td><td>{p}</td><td /></tr>)}
            </tbody>
          </TradeTable>
          <Strip>
            {["报价", "资金", "技术", "财务"].map((t, i) => <StripTab key={t} $active={i === 0}>{t}</StripTab>)}
          </Strip>
        </BookColumn>
      </Main>

      <News>
        <NewsItem href="#n1">乐经营范围新增酒类经营</NewsItem>
        <NewsItem href="#n2">15:17 国债期货全线收涨，10年期主力合约涨0.42%，5年期主力合约涨0.32%，2年期主力合约涨0.15%。</NewsItem>
        <NewsItem href="#n3">15:09 五成降噪耳机不合格 伪降噪耳机或致听力损伤</NewsItem>
        <NewsItem href="#n4">15:03 收评：创业板指大涨3.68% 高景气板块持续火爆</NewsItem>
        <NewsItem href="#n5">15:02 财联</NewsItem>
      </News>
      <IndexBar>
        <IndexCell $first>
          <span>84</span><span>23.75</span><span>0.67%</span><IndexAmount>5647.59亿</IndexAmount>
        </IndexCell>
        {indices.map(([n, a, b, c, d]) => (
          <IndexCell key={n}>
            <IndexName>{n}</IndexName><span>{a}</span><span>{b}</span><span>{c}</span><IndexAmount>{d}</IndexAmount>
          </IndexCell>
        ))}
        <FooterIcons><CalendarIcon /><Bell size={13} /></FooterIcons>
      </IndexBar>
    </Page>
  );
}
